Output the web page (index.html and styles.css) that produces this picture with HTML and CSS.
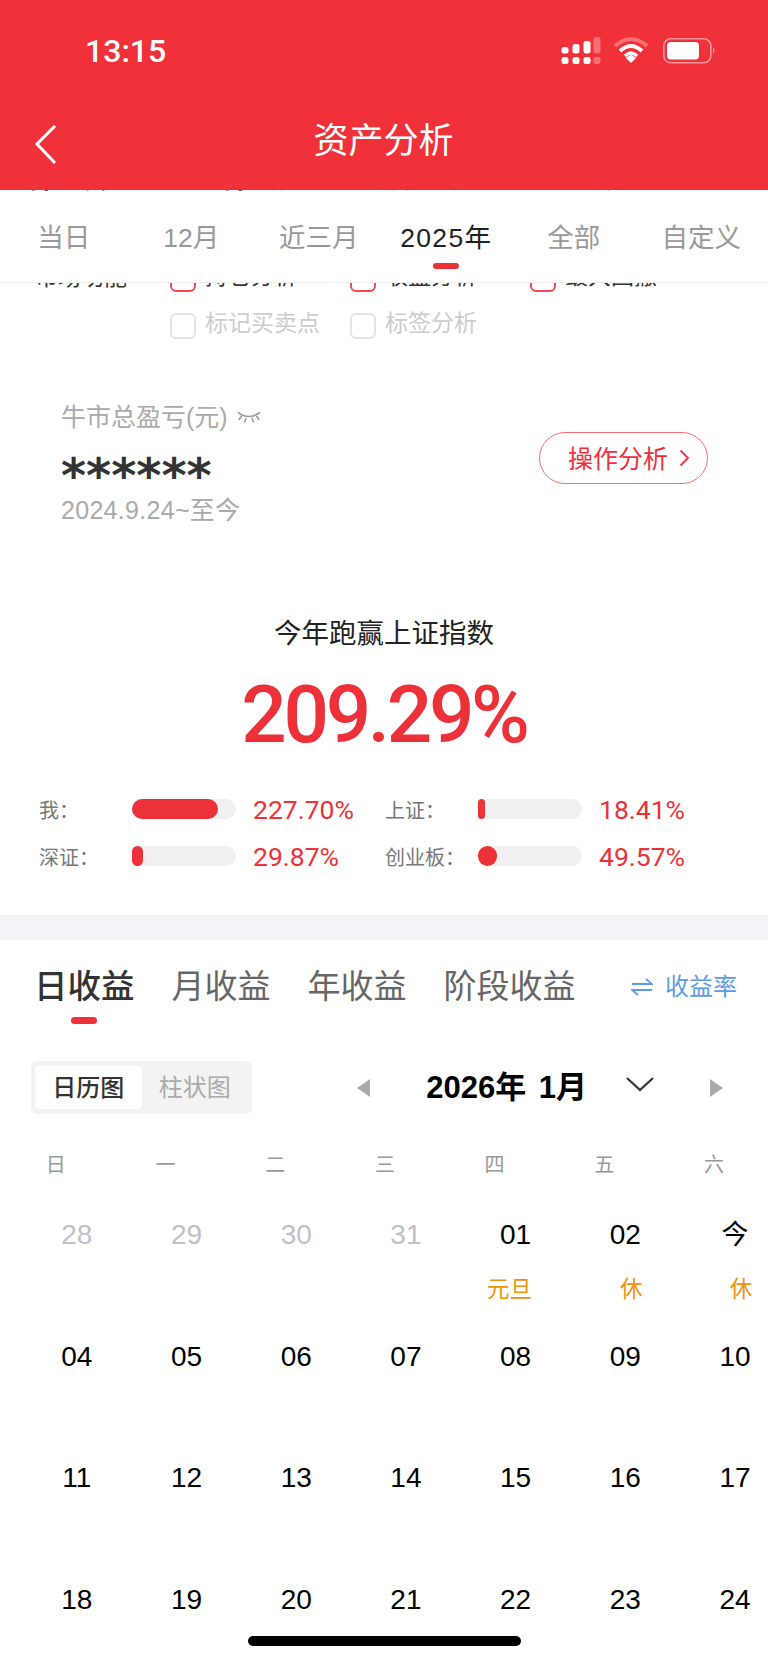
FILE: index.html
```html
<!DOCTYPE html>
<html lang="zh-CN">
<head>
  <meta charset="UTF-8">
  <title>资产分析</title>
  <link rel="stylesheet" href="styles.css">
</head>
<body>
<div class="app">
  <header class="top">
    <div class="status">
      <span class="time">13:15</span>
      <svg class="status-icons" width="156" height="30" viewBox="560 36 156 30">
        <g fill="#fff">
          <rect x="561.500" y="47" width="7" height="6.500" rx="2.500"/>
          <rect x="572.500" y="44" width="7" height="9.500" rx="2.500"/>
          <rect x="583.500" y="41" width="7" height="12.500" rx="2.500"/>
          <rect x="593.500" y="37" width="7" height="16.500" rx="2.500" opacity=".3"/>
          <rect x="561.500" y="57" width="7" height="7" rx="2.500"/>
          <rect x="572.500" y="57" width="7" height="7" rx="2.500"/>
          <rect x="583.500" y="57" width="7" height="7" rx="2.500"/>
          <rect x="593.500" y="57" width="7" height="7" rx="2.500" opacity=".3"/>
        </g>
        <path d="M615 46 Q631 32 647 46" fill="none" stroke="#fff" stroke-width="4" opacity=".3"/>
        <path d="M620 51 Q631 41 642 51" fill="none" stroke="#fff" stroke-width="4"/>
        <path d="M625 56 Q631 50 637 56" fill="none" stroke="#fff" stroke-width="3.500"/>
        <path d="M626 58 L631 54.500 L636 58 L631 63 Z" fill="#fff"/>
        <rect x="663.800" y="38.800" width="47" height="24" rx="7" fill="none" stroke="#fff" stroke-width="1.600" opacity=".5"/>
        <rect x="667" y="42" width="32" height="17.500" rx="4" fill="#fff"/>
        <path d="M713 47 Q716 50 713 54 Z" fill="#fff" opacity=".5"/>
      </svg>
    </div>
    <div class="nav">
      <svg class="back" width="24" height="42" viewBox="0 0 24 42">
        <path d="M21 3 L3 21 L21 40" fill="none" stroke="#fff" stroke-width="3"/>
      </svg>
      <span class="nav-title">资产分析</span>
    </div>
  </header>

  <div class="peek-top">
    <span class="pk1">持仓市值</span>
    <span class="pk2">持仓额</span>
    <span class="pk3">账户金额</span>
    <span class="pk4">全部</span>
  </div>

  <nav class="range-tabs">
    <div class="range">当日</div>
    <div class="range">12月</div>
    <div class="range">近三月</div>
    <div class="range active">2025年</div>
    <div class="range">全部</div>
    <div class="range">自定义</div>
  </nav>

  <div class="func func-clip">
    <span class="func-label">市场功能</span>
    <div class="opt"><i class="box checked"></i><span>持仓分析</span></div>
    <div class="opt"><i class="box checked"></i><span>收益分析</span></div>
    <div class="opt"><i class="box checked"></i><span>最大回撤</span></div>
  </div>
  <div class="func func-off">
    <span class="func-label"></span>
    <div class="opt"><i class="box"></i><span>标记买卖点</span></div>
    <div class="opt"><i class="box"></i><span>标签分析</span></div>
  </div>

  <section class="profit">
    <div class="profit-left">
      <div class="profit-label">牛市总盈亏(元)
        <svg class="eye" width="24" height="14" viewBox="0 0 26 14">
          <path d="M1 2 Q13 11 25 2 M5 6 L2 10 M10 8 L8 13 M16 8 L18 13 M21 6 L24 10" fill="none" stroke="#999" stroke-width="1.700"/>
        </svg>
      </div>
      <div class="stars">******</div>
      <div class="profit-date">2024.9.24~至今</div>
    </div>
    <div class="op-btn">操作分析
      <svg width="11" height="18" viewBox="0 0 11 18">
        <path d="M1.500 1.500 L9 9 L1.500 16.500" fill="none" stroke="#f0303c" stroke-width="1.800"/>
      </svg>
    </div>
  </section>

  <section class="beat">
    <h2 class="beat-title">今年跑赢上证指数</h2>
    <div class="beat-num">209.29%</div>
  </section>

  <section class="stats">
    <div class="stat">
      <span class="stat-label">我：</span>
      <div class="bar"><div class="fill" style="width:86px"></div></div>
      <span class="stat-val">227.70%</span>
    </div>
    <div class="stat">
      <span class="stat-label">上证：</span>
      <div class="bar"><div class="fill" style="width:7px"></div></div>
      <span class="stat-val">18.41%</span>
    </div>
    <div class="stat">
      <span class="stat-label">深证：</span>
      <div class="bar"><div class="fill" style="width:11px"></div></div>
      <span class="stat-val">29.87%</span>
    </div>
    <div class="stat">
      <span class="stat-label">创业板：</span>
      <div class="bar"><div class="fill" style="width:19px"></div></div>
      <span class="stat-val">49.57%</span>
    </div>
  </section>

  <div class="band"></div>

  <section class="income-tabs">
    <div class="income active">日收益</div>
    <div class="income">月收益</div>
    <div class="income">年收益</div>
    <div class="income">阶段收益</div>
    <div class="rate">
      <svg width="22" height="18" viewBox="0 0 22 18">
        <path d="M1 6 H21 L15 1 M21 12 H1 L7 17" fill="none" stroke="#5b9be8" stroke-width="1.800"/>
      </svg>
      收益率
    </div>
  </section>

  <section class="cal-bar">
    <div class="seg">
      <div class="seg-item on">日历图</div>
      <div class="seg-item">柱状图</div>
    </div>
    <div class="month-pick">
      <i class="tri tri-left"></i>
      <span class="month">2026年 1月</span>
      <svg class="drop" width="30" height="16" viewBox="0 0 30 16">
        <path d="M2 2 L15 14 L28 2" fill="none" stroke="#333" stroke-width="2.200"/>
      </svg>
      <i class="tri tri-right"></i>
    </div>
  </section>

  <div class="weekdays">
    <span>日</span><span>一</span><span>二</span><span>三</span><span>四</span><span>五</span><span>六</span>
  </div>

  <div class="days">
    <div class="day dim">28</div>
    <div class="day dim">29</div>
    <div class="day dim">30</div>
    <div class="day dim">31</div>
    <div class="day">01<em class="holiday">元旦</em></div>
    <div class="day">02<em class="rest">休</em></div>
    <div class="day"><span class="today">今</span><em class="rest">休</em></div>
    <div class="day">04</div>
    <div class="day">05</div>
    <div class="day">06</div>
    <div class="day">07</div>
    <div class="day">08</div>
    <div class="day">09</div>
    <div class="day">10</div>
    <div class="day">11</div>
    <div class="day">12</div>
    <div class="day">13</div>
    <div class="day">14</div>
    <div class="day">15</div>
    <div class="day">16</div>
    <div class="day">17</div>
    <div class="day">18</div>
    <div class="day">19</div>
    <div class="day">20</div>
    <div class="day">21</div>
    <div class="day">22</div>
    <div class="day">23</div>
    <div class="day">24</div>
  </div>

  <div class="home-bar"></div>
</div>
</body>
</html>
```

FILE: styles.css
```css
* {
  box-sizing: border-box;
}
html, body {
  margin: 0;
  height: 1663px;
  overflow: hidden;
  background: white;
}
body {
  font-family: "Liberation Sans", "Noto Sans CJK SC", sans-serif;
  color: #333;
}
.app {
  position: relative;
  width: 768px;
  height: 1663px;
  overflow: hidden;
}

/* red header */
.top {
  height: 190px;
  background: #f1313a;
  color: white;
}
.status {
  height: 106px;
  display: flex;
  justify-content: space-between;
  padding: 36px 52px 0 85px;
}
.time {
  font-family: Roboto, sans-serif;
  font-weight: 500;
  font-size: 32px;
  line-height: 30px;
}
.nav {
  position: relative;
  text-align: center;
  padding-top: 12px;
}
.nav-title {
  display: block;
  font-size: 35px;
  line-height: 46px;
  margin-left: -1px;
}
.back {
  position: absolute;
  left: 34px;
  top: 17px;
}

/* rows cut by the sticky bars */
.peek-top {
  height: 3px;
  overflow: hidden;
  position: relative;
  display: flex;
  align-items: flex-end;
  font-size: 23px;
  line-height: 23px;
  color: #333;
}
.peek-top span {
  flex: none;
  padding-bottom: 1px;
}
.pk1 { margin-left: 30px; }
.pk2 { margin-left: 102px; }
.pk3 { margin-left: 89px; color: #888; }
.pk4 { margin-left: 97px; color: #888; }

.range-tabs {
  height: 90px;
  display: grid;
  grid-template-columns: repeat(6, 1fr);
  border-bottom: 1px solid #eee;
  padding: 29px 3px 0 0;
}
.range {
  position: relative;
  text-align: center;
  font-size: 26.500px;
  line-height: 32px;
  color: #999;
}
.range.active {
  letter-spacing: 1.300px;
  color: #222;
}
.range.active::after {
  content: "";
  display: block;
  width: 26px;
  height: 6px;
  margin: 9px auto 0;
  background: #ec3138;
  border-radius: 3px;
}

.func {
  display: flex;
  padding-left: 35px;
  font-size: 23px;
}
.func-clip {
  height: 9px;
  overflow: hidden;
  align-items: flex-end;
  color: #333;
}
.func-off {
  margin-top: 21px;
  color: #ccc;
}
.func-label {
  flex: none;
  width: 135px;
  line-height: 23px;
  padding-bottom: 3px;
}
.opt {
  flex: none;
  width: 180px;
  height: 26px;
  display: flex;
  align-items: flex-start;
  gap: 9px;
  line-height: 26px;
}
.opt span {
  margin-top: -3px;
}
.box {
  display: block;
  width: 26px;
  height: 26px;
  border: 2px solid #e4e4e4;
  border-radius: 6px;
}
.box.checked {
  border-color: #ee4a52;
}

/* profit */
.profit {
  display: flex;
  justify-content: space-between;
  align-items: flex-start;
  padding: 63px 60px 0 61px;
}
.profit-label {
  font-size: 25px;
  line-height: 30px;
  color: #aaa;
  display: flex;
  align-items: center;
  gap: 9px;
}
.stars {
  font-family: "DejaVu Sans", sans-serif;
  font-weight: bold;
  font-size: 48px;
  line-height: 40px;
  height: 46px;
  margin-top: 17px;
  padding-top: 6px;
  color: #333;
}
.profit-date {
  font-size: 25px;
  letter-spacing: .3px;
  line-height: 30px;
  color: #aaa;
}
.op-btn {
  margin-top: 30px;
  width: 169px;
  height: 52px;
  border: 1.500px solid #f0707a;
  border-radius: 26px;
  display: flex;
  align-items: center;
  gap: 11px;
  padding: 0 0 3px 28px;
  font-size: 25px;
  color: #f0303c;
}
.op-btn svg {
  margin-top: 3px;
}

/* beat index */
.beat {
  margin-top: 89px;
  text-align: center;
}
.beat-title {
  margin: 0;
  font-weight: normal;
  font-size: 27.500px;
  line-height: 40px;
  color: #222;
}
.beat-num {
  margin-top: 16px;
  font-family: Roboto, sans-serif;
  font-weight: 500;
  font-size: 80px;
  line-height: 90px;
  letter-spacing: -3.300px;
  color: #ec3138;
}

.stats {
  display: grid;
  grid-template-columns: repeat(2, 346px);
  row-gap: 17px;
  padding-left: 39px;
  margin-top: 34px;
}
.stat {
  display: flex;
  align-items: center;
  height: 30px;
}
.stat-label {
  flex: none;
  width: 93px;
  font-size: 20px;
  color: #777;
}
.bar {
  flex: none;
  width: 104px;
  height: 20px;
  background: #f0f0f0;
  border-radius: 10px;
}
.fill {
  height: 100%;
  background: #ec3138;
  border-radius: 10px;
}
.stat-val {
  margin-left: 17px;
  font-family: Roboto, sans-serif;
  font-size: 26.500px;
  color: #ec3138;
}

.band {
  height: 25px;
  margin-top: 44px;
  background: #f3f4f8;
}

/* income tabs */
.income-tabs {
  display: flex;
  align-items: flex-start;
  gap: 37px;
  padding: 27px 31px 0 34px;
  height: 121px;
}
.income {
  font-size: 33px;
  line-height: 40px;
  color: #666;
}
.income.active {
  font-size: 33.500px;
  font-weight: 500;
  color: #333;
}
.income.active::after {
  content: "";
  display: block;
  width: 26px;
  height: 7px;
  margin: 10px auto 0;
  background: #ec3138;
  border-radius: 4px;
}
.rate {
  margin-left: auto;
  display: flex;
  align-items: center;
  gap: 12px;
  font-size: 24px;
  line-height: 40px;
  color: #5b9be8;
}

/* calendar */
.cal-bar {
  display: flex;
  align-items: center;
  justify-content: space-between;
  padding: 0 45px 0 31px;
}
.seg {
  width: 221px;
  height: 53px;
  padding: 5px 4px;
  display: flex;
  background: #f3f3f3;
  border-radius: 6px;
}
.seg-item {
  width: 107px;
  text-align: center;
  font-size: 24px;
  line-height: 43px;
  color: #aaa;
}
.seg-item.on {
  background: white;
  border-radius: 4px;
  color: #333;
  font-weight: 500;
}
.month-pick {
  display: flex;
  align-items: center;
}
.month {
  margin-left: 56px;
  font-weight: bold;
  font-size: 31px;
  word-spacing: 4px;
  line-height: 40px;
  color: black;
  white-space: pre;
}
.drop {
  margin: 0 0 8px 38px;
}
.tri {
  width: 0;
  height: 0;
  border-top: 9px solid transparent;
  border-bottom: 9px solid transparent;
}
.tri-left {
  border-right: 13px solid #aaa;
}
.tri-right {
  margin-left: 55px;
  border-left: 13px solid #aaa;
}

.weekdays {
  display: grid;
  grid-template-columns: repeat(7, 109.700px);
  margin: 36px 0 0 1px;
  font-size: 20px;
  line-height: 30px;
  color: #999;
  text-align: center;
}
.days {
  display: grid;
  grid-template-columns: repeat(7, 109.700px);
  grid-auto-rows: 121.500px;
  margin: 40px 0 0 22px;
  font-size: 28px;
  line-height: 30px;
  text-align: center;
  color: black;
}
.day.dim {
  color: #c0c0c8;
}
.day em {
  display: block;
  font-style: normal;
  font-size: 22.500px;
  margin-top: 25px;
  color: #f0930f;
}
.day .holiday {
  padding-right: 12px;
}
.day .rest {
  padding-left: 12px;
}
.today {
  font-size: 27px;
}

.home-bar {
  position: absolute;
  left: 248px;
  top: 1636px;
  width: 273px;
  height: 10px;
  background: black;
  border-radius: 5px;
}
```
